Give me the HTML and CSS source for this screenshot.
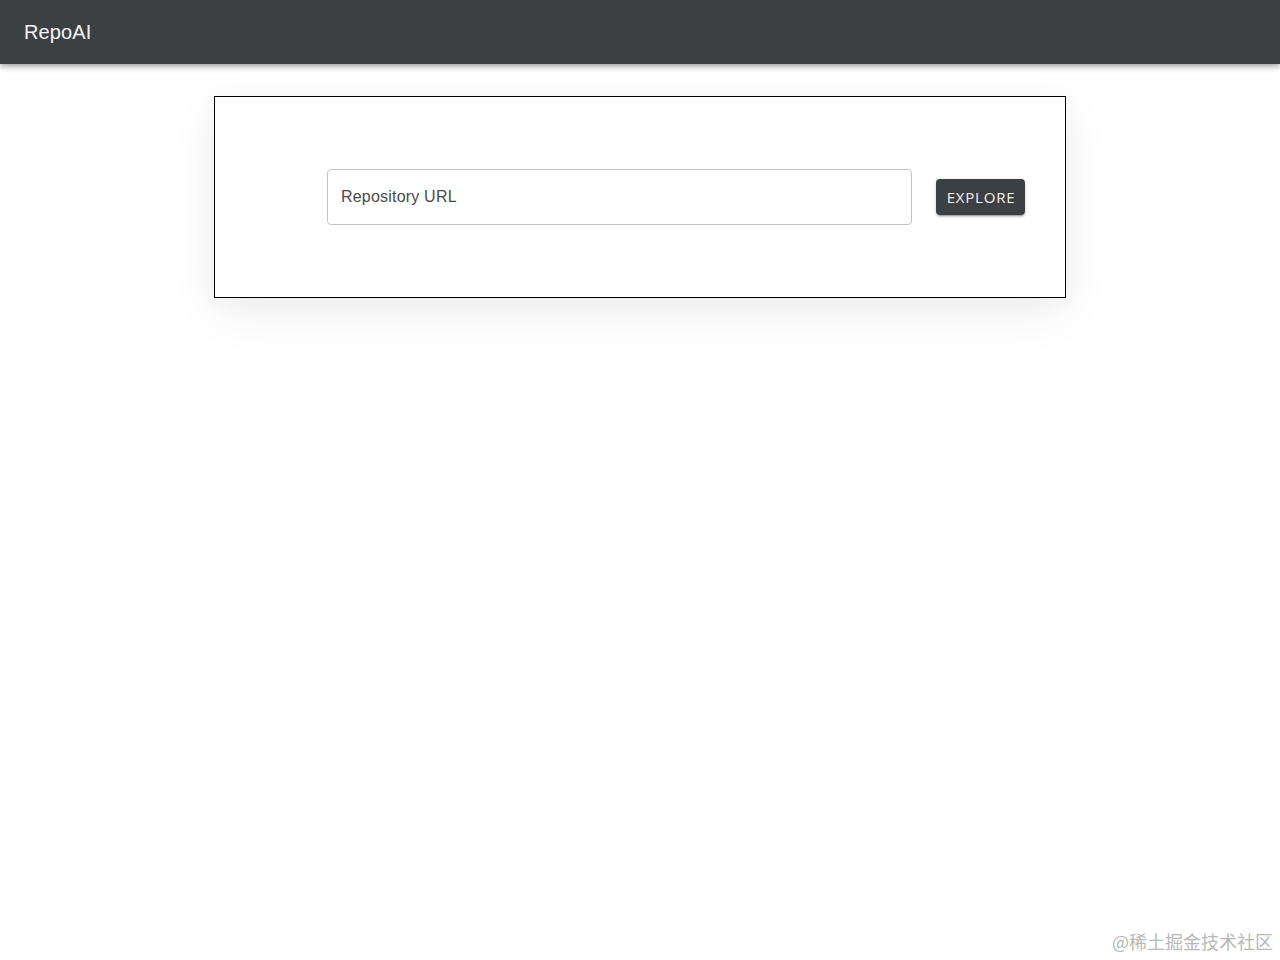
FILE: index.html
```html
<!DOCTYPE html>
<html lang="en">
<head>
<meta charset="utf-8">
<title>RepoAI</title>
<link rel="stylesheet" href="styles.css">
</head>
<body>
<header class="topbar">
  <span class="brand">RepoAI</span>
</header>
<main class="main">
  <section class="card">
    <div class="field">
      <input class="url-input" type="text" placeholder="Repository URL">
    </div>
    <button class="explore-btn" type="button">EXPLORE</button>
  </section>
</main>
<div class="watermark">@稀土掘金技术社区</div>
</body>
</html>
```
FILE: styles.css
```css
* { box-sizing: border-box; }
html, body { margin: 0; padding: 0; }
body {
  width: 1280px;
  height: 960px;
  background: #ffffff;
  font-family: "Liberation Sans", Arial, sans-serif;
  position: relative;
  overflow: hidden;
}
.topbar {
  height: 64px;
  background: #3d4043;
  display: flex;
  align-items: center;
  padding: 0 24px;
  box-shadow: 0 2px 4px -1px rgba(0,0,0,0.2), 0 4px 5px 0 rgba(0,0,0,0.14), 0 1px 10px 0 rgba(0,0,0,0.12);
  position: relative;
  z-index: 1;
}
.brand {
  color: #f4f4f4;
  font-size: 20px;
  letter-spacing: 0.1px;
}
.main {
  display: flex;
  justify-content: center;
  padding-top: 32px;
}
.card {
  width: 852px;
  height: 202px;
  border: 1px solid #000;
  background: #fff;
  display: flex;
  align-items: center;
  padding: 0 40px 0 112px;
  gap: 24px;
  box-shadow: 0 16px 48px rgba(0,0,0,0.06), 0 4px 24px rgba(0,0,0,0.04);
}
.field { flex: 1; }
.url-input {
  width: 585px;
  height: 56px;
  border: 1px solid #c4c4c4;
  border-radius: 4px;
  padding: 0 13px;
  font-family: "Liberation Sans", Arial, sans-serif;
  font-size: 16px;
  letter-spacing: 0.2px;
  color: #333;
  outline: none;
  background: #fff;
}
.url-input::placeholder { color: #4a4a4a; opacity: 1; }
.explore-btn {
  width: 89px;
  height: 36px;
  background: #3d4043;
  color: #f2f2f2;
  border: none;
  border-radius: 4px;
  font-family: "Open Sans", "Liberation Sans", sans-serif;
  font-size: 15px;
  letter-spacing: 0.8px;
  padding: 0 0 0 1px;
  box-shadow: 0 3px 1px -2px rgba(0,0,0,0.2), 0 2px 2px 0 rgba(0,0,0,0.14), 0 1px 5px 0 rgba(0,0,0,0.12);
  cursor: pointer;
}
.watermark {
  position: absolute;
  right: 7px;
  bottom: 7px;
  font-family: "Noto Sans CJK SC", sans-serif;
  font-size: 18px;
  color: #b8b8b8;
  line-height: 24px;
}
```
